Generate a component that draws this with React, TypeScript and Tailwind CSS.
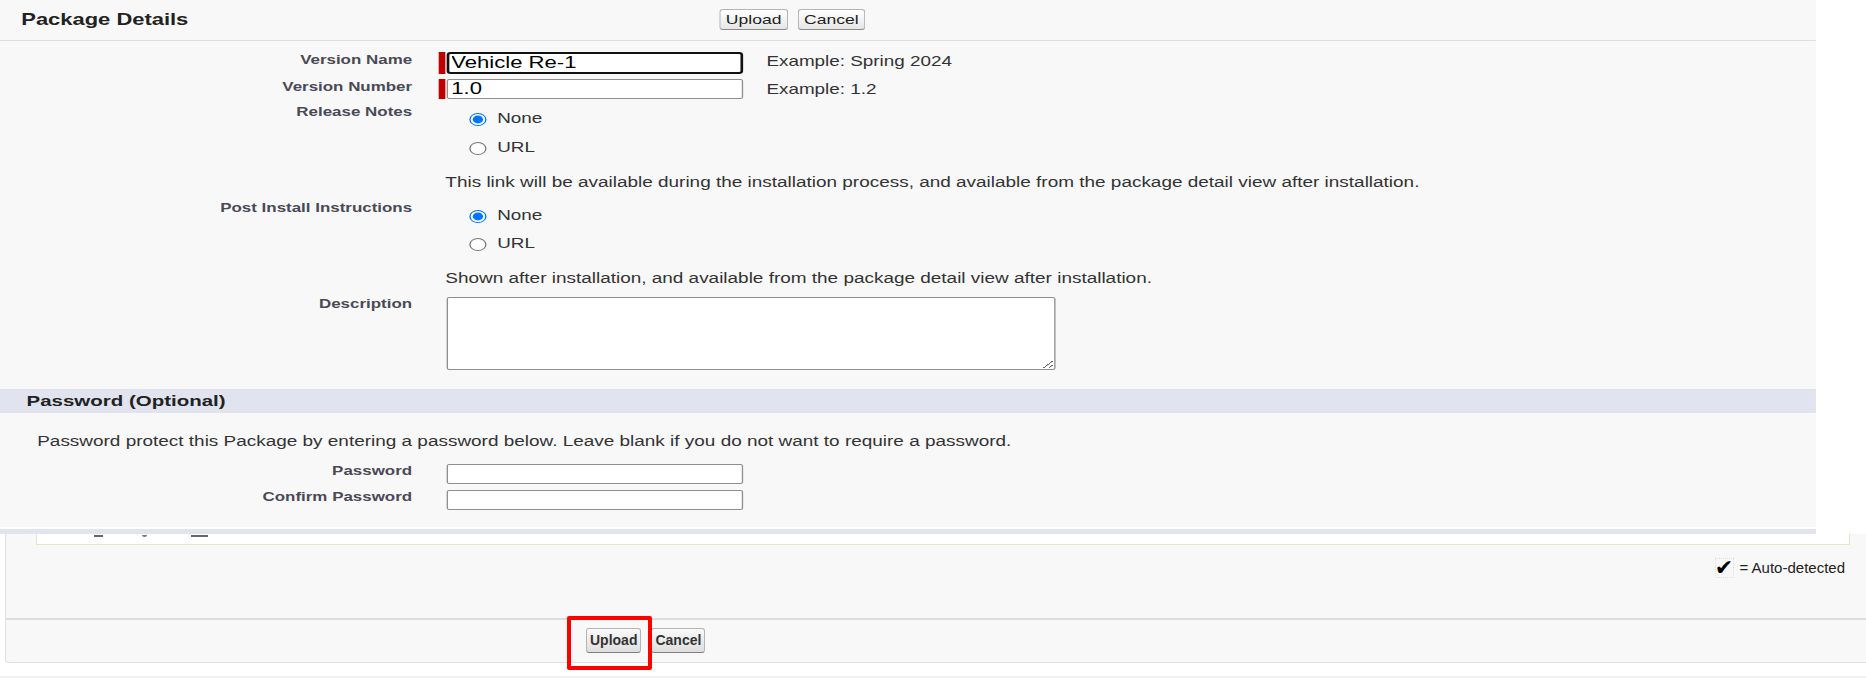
import React from "react";

function Label({ children, lh = "leading-[15px]" }: { children: React.ReactNode; lh?: string }) {
  return (
    <div className={`w-[310px] shrink-0 text-right text-[12.74px] font-bold text-[#4a4a56] ${lh}`}>{children}</div>
  );
}

function TopBtn({ children }: { children: React.ReactNode }) {
  return (
    <button className="h-[21px] px-[4px] border border-[#b5b5b5] border-b-[#8a8a8a] rounded-[3px] bg-gradient-to-b from-[#ffffff] to-[#e6e6e6] text-[13.2px] leading-[15px] font-normal text-[#222]">
      {children}
    </button>
  );
}

function BottomBtn({ children }: { children: React.ReactNode }) {
  return (
    <button className="h-[25px] px-[3px] border border-[#b5b5b5] border-b-[#7f7f7f] rounded-[3px] bg-gradient-to-b from-[#fafafa] to-[#dedede] text-[14px] leading-[17px] font-bold text-[#333]">
      {children}
    </button>
  );
}

function Radio({ label, checked, name }: { label: string; checked?: boolean; name: string }) {
  return (
    <label className="flex items-center h-[22px]">
      <input type="radio" name={name} defaultChecked={checked} className="m-0 ml-[23px] w-[13px] h-[13px]" />
      <span className="ml-[8px] text-[14.2px] text-[#333]">{label}</span>
    </label>
  );
}

export default function App() {
  return (
    <div className="w-[1866px] h-[681px] overflow-hidden bg-white font-['Liberation_Sans',Arial,sans-serif]">
      {/* Overlay panel (screenshot stretched horizontally) */}
      <div className="w-[1816px]">
        <div className="w-[1366px] h-[527px] origin-top-left scale-x-[1.3294] bg-[#f8f8f8]">
          {/* header */}
          <div className="h-[41px] border-b border-[#dddddd] flex items-start">
            <div className="w-[541px] shrink-0 pl-[16px] pt-[10px] text-[16.5px] leading-[19px] font-bold text-[#222]">
              Package Details
            </div>
            <div className="flex gap-[7px] pt-[9px]">
              <TopBtn>Upload</TopBtn>
              <TopBtn>Cancel</TopBtn>
            </div>
          </div>

          {/* Version Name */}
          <div className="flex items-start mt-[11px]">
            <Label>Version Name</Label>
            <div className="ml-[20px] flex items-start">
              <div className="w-[4.5px] h-[22px] bg-[#c00000]" />
              <input
                defaultValue="Vehicle Re-1"
                className="ml-[1px] w-[223px] h-[22px] border-2 border-[#111] rounded-[3px] bg-white px-[2px] text-[16.6px] text-black outline-none"
              />
              <span className="ml-[18px] text-[14.2px] leading-[18px] text-[#333]">Example: Spring 2024</span>
            </div>
          </div>

          {/* Version Number */}
          <div className="flex items-start mt-[5px]">
            <Label>Version Number</Label>
            <div className="ml-[20px] flex items-start">
              <div className="w-[4.5px] h-[20px] bg-[#c00000]" />
              <input
                defaultValue="1.0"
                className="ml-[1px] w-[223px] h-[20px] border border-[#8f8f8f] rounded-[2px] bg-white px-[3px] text-[16.6px] text-black outline-none"
              />
              <span className="ml-[18px] mt-[1px] text-[14.2px] leading-[18px] text-[#333]">Example: 1.2</span>
            </div>
          </div>

          {/* Release Notes */}
          <div className="flex items-start mt-[5px]">
            <Label>Release Notes</Label>
            <div className="ml-[20px] pt-[4px] flex flex-col">
              <Radio name="rn" label="None" checked />
              <div className="mt-[7px]">
                <Radio name="rn" label="URL" />
              </div>
              <div className="mt-[14px] ml-[5px] text-[14.25px] leading-[18px] text-[#333]">
                This link will be available during the installation process, and available from the package detail view after installation.
              </div>
            </div>
          </div>

          {/* Post Install Instructions */}
          <div className="flex items-start mt-[9px]">
            <Label>Post Install Instructions</Label>
            <div className="ml-[20px] pt-[5px] flex flex-col">
              <Radio name="pi" label="None" checked />
              <div className="mt-[6px]">
                <Radio name="pi" label="URL" />
              </div>
              <div className="mt-[14px] ml-[5px] text-[14.25px] leading-[18px] text-[#333]">
                Shown after installation, and available from the package detail view after installation.
              </div>
            </div>
          </div>

          {/* Description */}
          <div className="flex items-start mt-[9px]">
            <Label>Description</Label>
            <textarea className="ml-[26px] mt-[1px] w-[458px] h-[73px] border border-[#8f8f8f] rounded-[2px] bg-white outline-none" />
          </div>

          {/* Password header */}
          <div className="mt-[19px] h-[24px] bg-[#e1e4ee] pl-[20px] text-[15.4px] leading-[24px] font-bold text-[#222]">
            Password (Optional)
          </div>
          <div className="mt-[19px] pl-[28px] text-[14.25px] leading-[18px] text-[#333]">
            Password protect this Package by entering a password below. Leave blank if you do not want to require a password.
          </div>

          <div className="flex items-start mt-[14px]">
            <Label lh="leading-[13px]">Password</Label>
            <input type="password" className="ml-[25.5px] w-[223px] h-[20px] border border-[#8f8f8f] rounded-[2px] bg-white outline-none" />
          </div>
          <div className="flex items-start mt-[6px]">
            <Label lh="leading-[13px]">Confirm Password</Label>
            <input type="password" className="ml-[25.5px] w-[223px] h-[20px] border border-[#8f8f8f] rounded-[2px] bg-white outline-none" />
          </div>
        </div>
        <div className="h-[2px] bg-white" />
        <div className="h-[5px] bg-[#e1e4ee]" />
      </div>

      {/* Background page (visible part) */}
      <div className="relative ml-[5px] bg-[#f8f8f8] border-l border-b border-[#e0e0e0] rounded-bl-[4px]">
        <div className="relative ml-[30px] mr-[16px] h-[11px] bg-white border-x border-b border-[#e8e4cc]">
          <div className="absolute left-[57px] top-[1px] w-[9px] h-[2px] bg-[#666]" />
          <div className="absolute left-[105px] top-[0px] w-[5px] h-[3px] border-b-2 border-[#777] rounded-b-full" />
          <div className="absolute left-[154px] top-[1px] w-[17px] h-[2px] bg-[#666]" />
        </div>

        <div className="mt-[14px] h-[18px] pr-[21px] flex items-center justify-end">
          <span className="w-[19px] h-[20px] border border-dotted border-[#e2e2e2] flex items-center justify-center text-[22px] leading-none text-black font-['DejaVu_Sans',sans-serif]">
            ✔
          </span>
          <span className="ml-[6px] text-[15px] leading-[18px] text-[#222]">= Auto-detected</span>
        </div>

        <div className="mt-[41px] border-t-2 border-[#dcdcdc] h-[44px] flex items-start pt-[8px] pl-[580px] gap-[10px]">
          <BottomBtn>Upload</BottomBtn>
          <BottomBtn>Cancel</BottomBtn>
        </div>

        <div className="absolute left-[561px] top-[82px] w-[85px] h-[54px] border-[4px] border-[#ff0000] rounded-[2px]" />
      </div>
      <div className="mt-[13px] h-[2px] bg-[#f2f2f2]" />
    </div>
  );
}
